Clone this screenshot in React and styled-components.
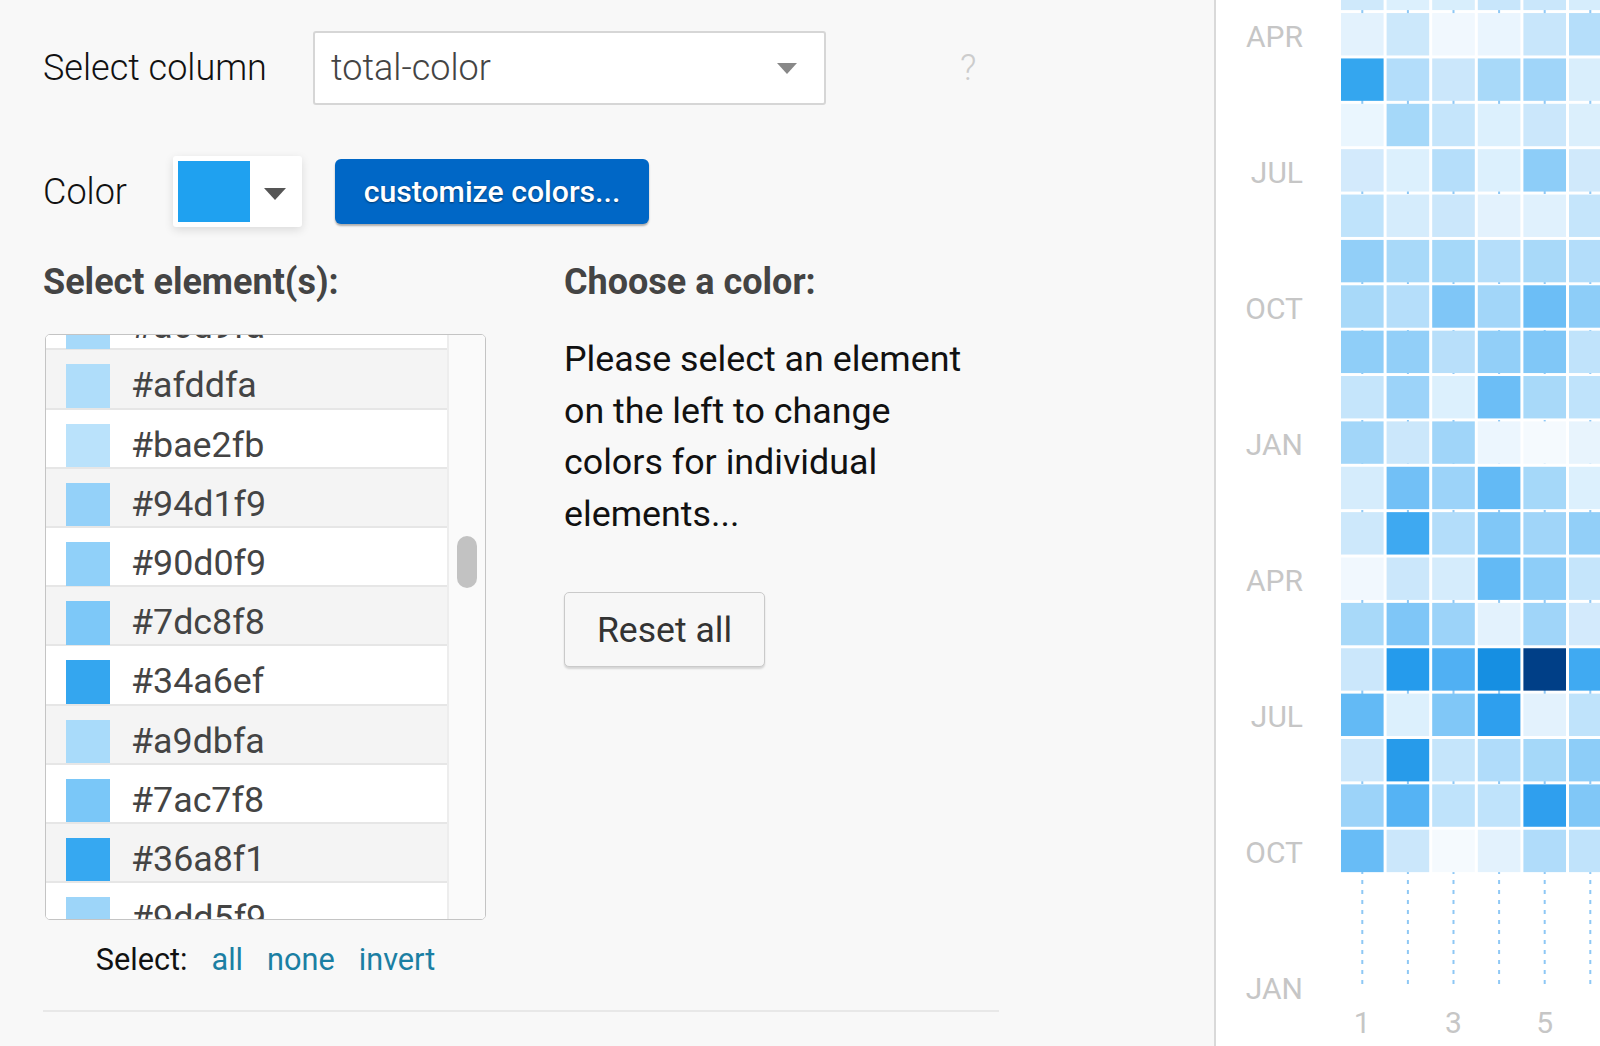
import React, { useLayoutEffect, useRef } from 'react';
import styled, { createGlobalStyle } from 'styled-components';

const GlobalStyle = createGlobalStyle`
  html, body {
    margin: 0;
    padding: 0;
  }
  body {
    font-family: Roboto, 'Liberation Sans', Arial, sans-serif;
    background: #f8f8f8;
    overflow: hidden;
  }
  * {
    box-sizing: border-box;
  }
`;

const Page = styled.div`
  display: flex;
  width: 1600px;
  height: 1046px;
  overflow: hidden;
`;

const Settings = styled.div`
  flex: none;
  width: 1216px;
  height: 100%;
  padding: 31px 0 0 43px;
  background: #f8f8f8;
  border-right: 2px solid #d9d9d9;
`;

const Inner = styled.div`
  width: 956px;
`;

const FieldRow = styled.div`
  display: flex;
  align-items: center;
  margin-top: ${(p) => p.$top || 0}px;
`;

const FieldLabel = styled.div`
  flex: none;
  width: ${(p) => p.$width}px;
  font-size: 36px;
  font-weight: 300;
  color: #111;
`;

const Caret = styled.span`
  display: block;
  width: 0;
  height: 0;
  margin-top: ${(p) => p.$shift || 0}px;
  border-left: ${(p) => p.$w / 2}px solid transparent;
  border-right: ${(p) => p.$w / 2}px solid transparent;
  border-top: ${(p) => p.$h}px solid ${(p) => p.$color};
`;

const SelectBox = styled.div`
  width: 513px;
  height: 74px;
  display: flex;
  align-items: center;
  justify-content: space-between;
  padding: 0 27px 0 16px;
  background: #fff;
  border: 2px solid #d6d6d6;
  border-radius: 3px;
  font-size: 36px;
  font-weight: 300;
  color: #444;
`;

const Help = styled.span`
  margin-left: 134px;
  font-size: 36px;
  font-weight: 300;
  color: #cccccc;
`;

const SwatchButton = styled.div`
  width: 129px;
  height: 71px;
  display: flex;
  align-items: center;
  padding: 5px;
  background: #fff;
  border-radius: 3px;
  box-shadow: 0 3px 10px rgba(0, 0, 0, 0.12);
`;

const SwatchFill = styled.div`
  width: 72px;
  height: 61px;
  margin-right: 14px;
  background: ${(p) => p.$color};
`;

const PrimaryButton = styled.div`
  width: 314px;
  height: 65px;
  margin-left: 33px;
  display: flex;
  align-items: center;
  justify-content: center;
  background: #0067c6;
  border-radius: 6px;
  box-shadow: 0 2px 2px rgba(0, 0, 0, 0.3);
  color: #fff;
  font-size: 30.2px;
  font-weight: 500;
  text-shadow: 0 1px 2px rgba(0, 0, 0, 0.45);
`;

const Columns = styled.div`
  display: grid;
  grid-template-columns: 521px 1fr;
  margin-top: 33.6px;
`;

const Heading = styled.h3`
  margin: 0 0 31.7px;
  font-size: 36px;
  line-height: 42px;
  font-weight: 700;
  color: #444;
`;

const ListBox = styled.div`
  width: 441px;
  height: 586px;
  margin-left: 2px;
  display: flex;
  background: #fff;
  border: 1.5px solid #c4c4c4;
  border-radius: 5px;
  overflow: hidden;
`;

const ListViewport = styled.div`
  flex: 1;
  overflow: hidden;
  border-right: 2px solid #ededed;
`;

const ScrollTrack = styled.div`
  position: relative;
  flex: none;
  width: 36.5px;
  background: #fafafa;
`;

const ScrollThumb = styled.div`
  position: absolute;
  left: 8.7px;
  top: 201px;
  width: 20px;
  height: 51.6px;
  border-radius: 10px;
  background: #c2c2c2;
`;

const ListRow = styled.div`
  height: 59.2px;
  display: flex;
  align-items: flex-start;
  padding: 14px 0 0 20px;
  background: ${(p) => (p.$shade ? '#f4f4f4' : '#fff')};
  border-bottom: 2px solid #e6e6e6;
`;

const RowSwatch = styled.div`
  flex: none;
  width: 44px;
  height: 43.5px;
  background: ${(p) => p.$color};
`;

const RowText = styled.span`
  margin-left: 21px;
  font-size: 35.8px;
  line-height: 42px;
  color: #444;
`;

const SelectLine = styled.div`
  width: 441px;
  margin: 21.6px 0 0 2px;
  display: flex;
  justify-content: center;
  gap: 24px;
  font-size: 30.7px;
  line-height: 36px;
  color: #111;
`;

const LinkText = styled.span`
  color: #1b7fa3;
`;

const Message = styled.p`
  width: 415px;
  margin: 0;
  font-size: 35.8px;
  line-height: 51.5px;
  color: #111;
`;

const GhostButton = styled.div`
  width: 201px;
  height: 75px;
  margin-top: 52px;
  display: flex;
  align-items: center;
  justify-content: center;
  background: #f7f7f7;
  border: 1.5px solid #cacaca;
  border-radius: 5px;
  box-shadow: 0 2px 2px rgba(0, 0, 0, 0.14);
  font-size: 35.6px;
  color: #333;
`;

const Divider = styled.hr`
  width: 956px;
  height: 2px;
  margin: 32px 0 0;
  border: none;
  background: #e8e8e8;
`;

const ChartPanel = styled.div`
  flex: 1;
  height: 100%;
  background: #fff;
  overflow: hidden;
`;

const ChartSvg = styled.svg`
  display: block;
  font-family: Roboto, 'Liberation Sans', Arial, sans-serif;
`;

const ITEMS = [
  '#a6d9fa',
  '#afddfa',
  '#bae2fb',
  '#94d1f9',
  '#90d0f9',
  '#7dc8f8',
  '#34a6ef',
  '#a9dbfa',
  '#7ac7f8',
  '#36a8f1',
  '#9dd5f9',
];

const CELLS = [
  ['#cfe9fb', '#dcf0fd', '#d8eefc', '#c8e6fb', '#cae7fb', '#d6edfc'],
  ['#e3f2fd', '#cce8fb', '#f1f8fe', '#eaf5fe', '#c8e6fb', '#b5defa'],
  ['#34a6ef', '#b3ddfa', '#cbe7fb', '#a8d9f9', '#a0d5f9', '#d9eefc'],
  ['#eaf6fe', '#a5d8f9', '#c5e5fb', '#dcf0fd', '#cbe7fb', '#dbeffc'],
  ['#d3eafc', '#dcf0fd', '#b5defa', '#dcf0fd', '#8dcdf8', '#d0e9fb'],
  ['#bfe3fb', '#d5ecfc', '#cbe7fb', '#e3f2fd', '#e0f1fd', '#c5e5fb'],
  ['#92cff8', '#a8d9f9', '#a5d8f9', '#b5defa', '#a8d9f9', '#b3ddfa'],
  ['#a8d9f9', '#b5defa', '#7fc6f7', '#a2d6f9', '#6cbef6', '#8dcdf8'],
  ['#8fcef8', '#92cff8', '#b8dffa', '#92cff8', '#80c7f7', '#c0e3fb'],
  ['#c5e5fb', '#9cd3f9', '#dcf0fd', '#6cbef6', '#a8d9f9', '#bfe3fb'],
  ['#a2d6f9', '#cbe7fb', '#a0d5f9', '#ecf6fe', '#f5fafe', '#e8f4fd'],
  ['#d5ecfc', '#72c0f6', '#9cd3f9', '#63baf5', '#a5d8f9', '#dcf0fd'],
  ['#cde8fb', '#3ea9f1', '#b3ddfa', '#80c7f7', '#a0d5f9', '#92cff8'],
  ['#f1f8fe', '#cbe7fb', '#d5ecfc', '#63baf5', '#8dcdf8', '#c5e5fb'],
  ['#a8d9f9', '#7fc6f7', '#9cd3f9', '#e3f2fd', '#a0d5f9', '#d3eafc'],
  ['#cbe7fb', '#259bec', '#50b0f3', '#168fe2', '#003f87', '#40aaf2'],
  ['#63baf5', '#dcf0fd', '#80c7f7', '#2e9fee', '#e3f2fd', '#bfe3fb'],
  ['#cbe7fb', '#279bea', '#c5e5fb', '#b0dcfa', '#a5d8f9', '#8dcdf8'],
  ['#9cd3f9', '#55b3f4', '#bfe3fb', '#bfe3fb', '#2f9fee', '#80c7f7'],
  ['#68bcf6', '#cbe7fb', '#f5fafe', '#e3f2fd', '#b0dcfa', '#c0e3fb'],
];

const MONTHS = ['APR', 'JUL', 'OCT', 'JAN', 'APR', 'JUL', 'OCT', 'JAN'];

// chart geometry, in the chart panel's own coordinates
const COL_X = 125;
const COL_STEP = 45.6;
const CELL_W = 42.6;
const ROW_Y = -32.3;
const ROW_STEP = 45.37;
const CELL_H = 42.4;

const Heatmap = () => (
  <ChartSvg width="384" height="1046" viewBox="0 0 384 1046">
    {CELLS[0].map((_, i) => (
      <line
        key={`g${i}`}
        x1={COL_X + CELL_W / 2 + i * COL_STEP}
        x2={COL_X + CELL_W / 2 + i * COL_STEP}
        y1="0"
        y2="990"
        stroke="#8ec8f5"
        strokeWidth="2"
        strokeDasharray="4 6"
      />
    ))}
    {CELLS.map((row, r) =>
      row.map((color, c) => (
        <rect
          key={`${r}-${c}`}
          x={COL_X + c * COL_STEP}
          y={ROW_Y + r * ROW_STEP}
          width={CELL_W}
          height={CELL_H}
          fill={color}
        />
      ))
    )}
    {MONTHS.map((m, i) => (
      <text
        key={`m${i}`}
        x="87"
        y={46.7 + i * 136.1}
        textAnchor="end"
        fontSize="30"
        fill="#c6c6c6"
      >
        {m}
      </text>
    ))}
    {['1', '3', '5'].map((n, i) => (
      <text
        key={`n${n}`}
        x={COL_X + CELL_W / 2 + i * 2 * COL_STEP}
        y="1033"
        textAnchor="middle"
        fontSize="30"
        fill="#c6c6c6"
      >
        {n}
      </text>
    ))}
  </ChartSvg>
);

const ElementList = () => {
  const viewport = useRef(null);

  useLayoutEffect(() => {
    if (viewport.current) viewport.current.scrollTop = 44;
  }, []);

  return (
    <ListBox>
      <ListViewport ref={viewport}>
        {ITEMS.map((hex, i) => (
          <ListRow key={hex} $shade={i % 2 === 1}>
            <RowSwatch $color={hex} />
            <RowText>{hex}</RowText>
          </ListRow>
        ))}
      </ListViewport>
      <ScrollTrack>
        <ScrollThumb />
      </ScrollTrack>
    </ListBox>
  );
};

const App = () => {
  return (
    <Page>
      <GlobalStyle />
      <Settings>
        <Inner>
          <FieldRow>
            <FieldLabel $width={270}>Select column</FieldLabel>
            <SelectBox>
              <span>total-color</span>
              <Caret $w={21} $h={11} $color="#888" />
            </SelectBox>
            <Help>?</Help>
          </FieldRow>

          <FieldRow $top={51}>
            <FieldLabel $width={130}>Color</FieldLabel>
            <SwatchButton>
              <SwatchFill $color="#1fa1f0" />
              <Caret $w={22} $h={12} $color="#555" $shift={4} />
            </SwatchButton>
            <PrimaryButton>customize colors...</PrimaryButton>
          </FieldRow>

          <Columns>
            <div>
              <Heading>Select element(s):</Heading>
              <ElementList />
              <SelectLine>
                <span>Select:</span>
                <LinkText>all</LinkText>
                <LinkText>none</LinkText>
                <LinkText>invert</LinkText>
              </SelectLine>
            </div>
            <div>
              <Heading>Choose a color:</Heading>
              <Message>
                Please select an element on the left to change colors for
                individual elements...
              </Message>
              <GhostButton>Reset all</GhostButton>
            </div>
          </Columns>

          <Divider />
        </Inner>
      </Settings>
      <ChartPanel>
        <Heatmap />
      </ChartPanel>
    </Page>
  );
};

export default App;
